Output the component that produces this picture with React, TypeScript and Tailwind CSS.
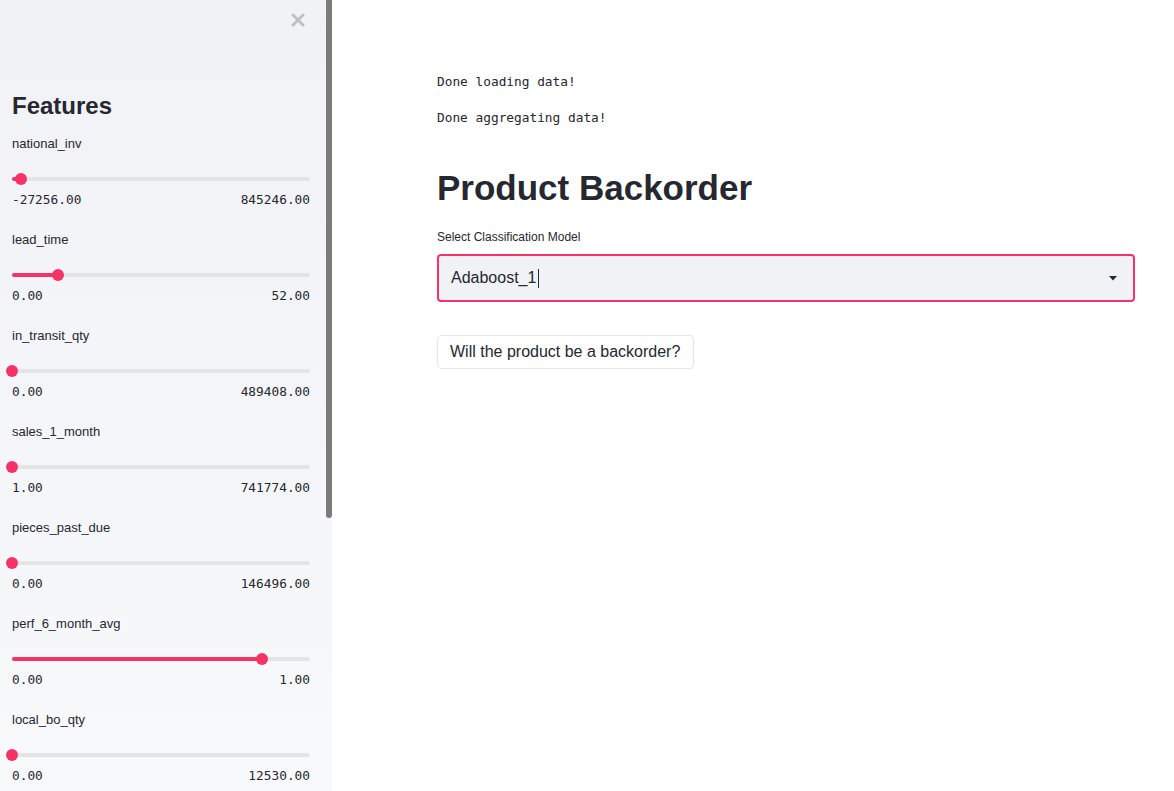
const sans = "font-['Liberation_Sans',Arial,sans-serif]";
const mono = "font-['DejaVu_Sans_Mono','Liberation_Mono',monospace]";

type Feature = { name: string; min: string; max: string; pos: number };

// pos = thumb centre, px from track start (track is 298px wide)
const features: Feature[] = [
  { name: "national_inv", min: "-27256.00", max: "845246.00", pos: 9 },
  { name: "lead_time", min: "0.00", max: "52.00", pos: 46 },
  { name: "in_transit_qty", min: "0.00", max: "489408.00", pos: 0 },
  { name: "sales_1_month", min: "1.00", max: "741774.00", pos: 0 },
  { name: "pieces_past_due", min: "0.00", max: "146496.00", pos: 0 },
  { name: "perf_6_month_avg", min: "0.00", max: "1.00", pos: 250 },
  { name: "local_bo_qty", min: "0.00", max: "12530.00", pos: 0 },
];

function Slider({ f }: { f: Feature }) {
  return (
    <div className="flex h-[96px] shrink-0 flex-col">
      <div className={`h-5 text-[13px] leading-5 text-[#262730] ${sans}`}>{f.name}</div>
      <div className="relative mt-[23px] h-1 rounded-full bg-[#e4e4e4]">
        <div className="absolute left-0 top-0 h-1 rounded-full bg-[#f63366]" style={{ width: f.pos }} />
        <div
          className="absolute top-[-4px] h-3 w-3 rounded-full bg-[#f63366]"
          style={{ left: f.pos - 6 }}
        />
      </div>
      <div className={`mt-[10px] flex h-[18px] justify-between text-[12.8px] leading-[18px] text-[#262730] ${mono}`}>
        <span>{f.min}</span>
        <span>{f.max}</span>
      </div>
    </div>
  );
}

export default function App() {
  return (
    <div className="flex h-[791px] w-full overflow-hidden bg-white">
      {/* Sidebar */}
      <aside className="relative h-full w-[332px] shrink-0 overflow-hidden bg-gradient-to-b from-[#f0f2f6] to-[#f8f9fb]">
        <div className="flex h-full flex-col pl-3 pr-[22px]">
          <div className="flex h-[40px] shrink-0 items-center justify-end pr-[5px]">
            <svg width="14" height="14" viewBox="0 0 14 14">
              <path d="M2 2 L12 12 M12 2 L2 12" stroke="#bfbfc4" strokeWidth="3" strokeLinecap="round" />
            </svg>
          </div>
          <h2 className={`mt-[50px] h-8 shrink-0 text-[24px] font-bold leading-8 text-[#262730] ${sans}`}>Features</h2>
          <div className="mt-3 flex flex-col">
            {features.map((f) => (
              <Slider key={f.name} f={f} />
            ))}
          </div>
        </div>
        {/* scrollbar thumb */}
        <div className="absolute right-0 top-0 h-[518px] w-[6px] rounded-b-sm bg-[#7b7b7b]" />
      </aside>

      {/* Main content */}
      <main className="flex-1 pl-[105px] pt-[72px]">
        <div className="w-[698px]">
          <div className={`h-5 text-[12.8px] leading-5 text-[#262730] ${mono}`}>Done loading data!</div>
          <div className={`mt-4 h-5 text-[12.8px] leading-5 text-[#262730] ${mono}`}>Done aggregating data!</div>
          <h1 className={`mt-[36px] h-12 text-[35px] font-bold leading-[48px] text-[#262730] ${sans}`}>Product Backorder</h1>
          <div className={`mt-[16px] h-[18px] text-[12px] leading-[18px] text-[#262730] ${sans}`}>Select Classification Model</div>
          <div className="mt-[8px] flex h-[48px] items-center justify-between rounded-[4px] border-2 border-[#f63366] bg-[#f0f2f6] pl-3 pr-4">
            <div className={`flex items-center text-[16px] text-[#262730] ${sans}`}>
              <span>Adaboost_1</span>
              <span className="ml-[2px] h-[19px] w-px bg-[#262730]" />
            </div>
            <svg width="8" height="5" viewBox="0 0 8 5">
              <path d="M0 0 L8 0 L4 4.5 Z" fill="#262730" />
            </svg>
          </div>
          <button
            className={`mt-[33px] flex h-[34px] w-[257px] items-center rounded-[4px] border border-[#e6e6ea] bg-white px-3 text-[16px] text-[#262730] ${sans}`}
          >
            Will the product be a backorder?
          </button>
        </div>
      </main>
    </div>
  );
}
